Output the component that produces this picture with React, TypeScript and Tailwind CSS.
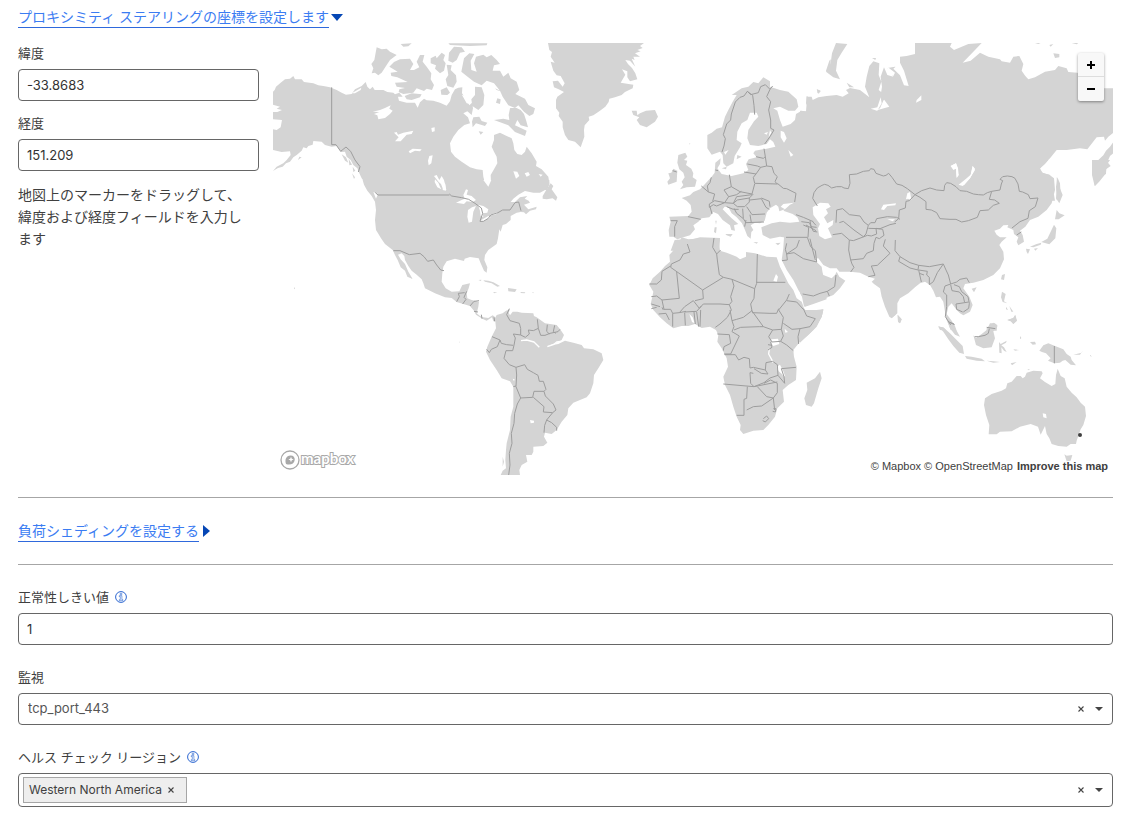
import { useState } from "react";

type Tile = {
  x: number;
  y: number;
  land?: string;
  water?: string;
  borders?: string;
  rivers?: string;
};

// Each tile is drawn on a grid three times finer than the map itself.
const TILES: Tile[] = [
  // Alaska, Canada and the arctic islands
  {
    x: -3,
    y: -3,
    land: `M9 155 L14 150 18 140 32 128 45 118 60 116 70 108 75 118 95 118 102 126 130 130 145 136 160 138 180 142 200 150 215 158 228 164 245 162 255 148 275 138 287 126 292 140 300 148 308 140 314 150 340 150 352 156 370 158 375 163 388 158 398 170 384 170 387 182 410 188 435 188 443 203 450 187 462 176 470 181 490 182 510 188 530 197 540 184 545 165 555 148 565 143 577 142 576 160 590 180 598 196 606 188 609 205 605 225 592 214 580 220 594 232 600 250 583 255 565 270 550 290 540 310 543 335 555 350 575 365 600 382 620 388 638 390 640 410 645 430 655 440 663 430 662 405 672 388 682 370 680 350 672 335 665 320 672 300 672 285 690 278 710 288 725 295 730 310 733 330 742 342 755 345 765 335 770 320 785 340 800 365 798 378 815 388 835 410 838 430 832 450 300 455 290 435 275 415 268 400 262 385 250 375 242 360 230 350 225 335 213 336 200 318 185 320 165 315 155 305 130 303 128 314 115 318 110 325 100 322 95 332 80 345 70 352 60 365 48 370 38 380 24 384 9 393 20 380 40 370 50 360 62 345 60 334 35 336 9 330Z
      M320 22 L335 28 350 26 360 35 380 45 360 60 350 75 335 98 325 106 315 98 305 100 310 85 304 72 313 60Z
      M358 80 L372 66 390 58 420 56 430 72 420 90 432 90 448 82 440 65 450 45 463 45 458 65 470 80 484 100 482 118 492 135 486 150 470 146 462 153 440 145 430 158 400 162 386 156 388 148 405 144 380 140 375 128 413 126 382 112 364 108 362 98 383 95Z
      M482 55 L497 47 500 55 515 38 525 45 520 60 527 70 522 92 510 100 495 86 498 76 482 70Z
      M530 74 L545 76 542 90 558 106 560 125 550 143 532 138 527 118 535 105Z
      M537 38 L552 20 575 22 585 35 570 38 560 60 548 68 535 62Z
      M535 10 L652 10 650 16 600 18 540 15Z M392 12 L425 10 415 19 400 20Z
      M582 55 L598 40 613 42 602 62 604 90 620 95 612 70 618 50 640 44 650 52 664 45 680 60 690 72 672 76 668 92 690 92 700 110 715 98 722 115 740 125 748 150 736 162 765 176 775 195 795 205 790 222 778 228 762 215 745 196 735 204 715 196 698 170 690 152 672 130 650 122 635 136 612 125 590 108 574 95Z
      M615 140 L635 142 643 165 640 195 625 210 607 198 604 178 615 165Z
      M610 232 L628 230 635 243 652 248 645 258 618 250 608 262 606 245Z M626 274 L640 276 632 284Z
      M672 240 L700 236 718 240 716 225 720 205 732 200 752 210 762 222 768 240 774 262 752 256 742 240 735 256 770 272 765 288 735 276 715 256Z
      M512 150 L530 142 540 158 532 165 514 164Z M682 175 L692 178 690 192 678 188Z M675 145 L698 156 680 150Z
      M404 168 L425 160 455 163 450 172 425 180 410 178Z
      M215 343 L228 352 235 368 225 362Z M236 356 L246 374 238 376Z M248 380 L256 392 250 396Z M246 400 L255 412 252 417Z M88 350 L95 352 84 360Z`,
    water: `M9 194 L30 200 20 206 36 210 22 216 9 216Z M9 238 L36 240 32 262 20 270 9 268Z
      M308 215 L330 210 345 204 362 196 358 206 368 212 360 222 345 234 325 238 322 226 312 222 328 216Z
      M372 278 L380 276 384 284 400 278 430 272 425 282 410 284 392 304 375 304 386 292Z
      M416 334 L428 326 455 328 450 334 435 332 420 340Z
      M484 264 L494 262 494 274 486 276Z M478 348 L488 346 484 370 476 376 474 362Z
      M492 408 L500 405 508 420 515 408 522 420 529 450 520 450 513 432 506 426Z
      M730 394 L742 395 748 408 738 416Z M764 400 L775 396 780 405 770 410Z M806 402 L818 404 812 410Z
      M245 160 L262 150 274 143 272 150 255 160Z M576 165 L590 168 600 192 590 190Z`,
    borders: `M185 142 L185 314 198 314 212 334 228 321 242 334 255 360 270 380 265 396`,
  },
  // United States, Mexico and the Caribbean
  {
    x: -3,
    y: 137,
    land: `M278 0 L838 0 838 15 825 30 810 38 790 38 765 33 745 44 730 56 722 66 735 66 750 52 772 48 764 56 776 62 780 68 762 74 775 88 800 80 798 88 780 92 768 103 762 97 752 96 740 98 722 108 722 120 708 132 698 135 692 155 688 148 684 175 680 192 655 210 645 225 643 240 652 262 650 278 642 272 632 250 626 235 600 231 584 236 582 243 555 236 530 244 520 260 517 280 515 305 527 325 545 335 568 334 577 315 600 310 596 325 590 340 592 355 605 360 627 365 625 380 620 400 630 408 640 412 655 414 668 406 676 412 678 424 670 424 666 412 650 422 637 416 618 404 612 392 600 378 580 372 560 366 545 354 525 352 495 340 465 325 460 310 455 298 440 284 425 272 415 258 405 240 403 228 395 220 384 224 392 238 405 252 415 275 428 297 412 290 405 272 392 262 383 240 375 225 368 210 345 192 334 176 324 160 318 150 315 120 318 90 315 65 305 48 292 32 282 14Z
      M288 24 L305 34 315 46 303 42Z
      M818 48 L830 28 842 10 850 18 845 28 855 42 862 52 858 62 848 55 830 58 818 56Z
      M640 301 L655 302 670 307 690 318 682 320 665 310 645 305Z M714 324 L740 328 735 336 715 334Z M752 336 L766 337 764 340 752 339Z M670 336 L682 337 672 340Z M625 300 L634 299 633 303Z M786 337 L791 337 790 340Z M72 320 L75 326 72 328Z`,
    water: `M558 68 L575 60 584 56 580 45 588 28 594 30 590 44 605 48 618 60 608 66 590 64 582 72Z
      M606 82 L618 78 610 95 606 125 596 128 592 110 594 90Z
      M624 74 L640 78 655 88 652 98 638 100 640 112 632 108 630 92Z
      M630 122 L655 108 662 112 640 124Z M660 104 L684 96 680 102 664 106Z
      M495 -2 L505 8 510 20 514 28 502 22 494 6Z M516 0 L526 12 528 32 518 30 520 14Z M640 0 L664 0 655 20Z
      M310 36 L324 42 318 56Z`,
    borders: `M316 38 L324 45 538 45 M538 42 L545 48 575 53 596 58 615 70 634 84 638 100 630 124 640 124 655 115 662 105 684 98 698 90 720 90 735 68 746 66 753 92
      M370 212 L390 212 418 224 450 220 462 230 473 244 490 240 500 255 512 270 522 272
      M560 365 L568 350 565 340 584 338 M590 334 L582 352 588 358 578 372 M600 378 L612 364 627 362 M612 394 L624 396 M634 404 L636 416 M672 412 L674 424`,
  },
  // South America
  {
    x: 157,
    y: 237,
    land: `M195 115 L200 105 218 100 228 92 240 88 236 98 240 106 248 95 262 95 275 98 310 100 312 108 320 112 345 130 380 135 392 150 402 165 395 180 375 190 352 198 385 192 405 182 430 188 455 195 462 205 490 208 515 220 520 240 505 265 492 285 490 310 480 340 470 352 450 360 430 368 415 385 412 405 395 425 380 450 365 462 345 458 342 470 352 488 340 498 310 500 310 515 305 525 288 525 292 545 275 555 268 570 270 585 212 585 218 572 228 565 226 540 228 510 230 490 240 450 242 410 250 380 250 320 240 304 215 295 200 270 180 240 168 215 172 200 185 170 198 145Z
      M218 530 L222 545 218 560Z M87 184 L89 187 87 188Z`,
    water: `M300 420 L312 422 312 428 302 430Z M248 296 L254 298 252 304Z`,
    rivers: `M273 182 L290 180 312 186 328 202 M352 200 L370 194 380 186 392 184`,
    borders: `M238 86 L230 104 240 122 268 130 272 145 272 165 250 162 256 174 252 196 248 212 228 212 222 235 238 254 258 262
      M272 165 L286 172 298 162 295 150 310 152 325 145 322 118 M325 145 L332 166 345 166 360 160 384 155 390 148 M352 134 L350 154 358 162 M374 136 L370 155 378 160
      M186 170 L210 180 214 190 230 194 250 196 M210 180 L202 200 184 208 178 218 170 208
      M258 262 L284 254 292 268 310 278 324 286 328 304 340 304 348 328 342 334 312 334 308 352 272 354 258 320 260 285 258 262
      M250 320 L258 318 M342 334 L346 348 370 372 378 390 368 398 340 396 342 380 310 352 M368 398 L350 420 344 436 342 458 M350 420 L365 428 380 442 380 452
      M272 354 L262 372 254 400 252 430 244 460 246 490 238 520 240 555 236 585`,
  },
  // Greenland, northern Europe and the Mediterranean
  {
    x: 267,
    y: -3,
    land: `M24 9 L312 9 300 18 308 24 292 30 302 34 285 40 300 50 280 50 284 60 275 56 286 80 270 62 256 60 264 72 276 84 286 100 292 118 270 124 262 112 262 94 246 88 256 104 242 128 280 134 278 145 255 156 245 165 225 172 208 176 206 186 196 200 180 212 160 226 146 230 148 240 134 256 132 270 133 290 122 322 105 305 85 300 75 285 68 262 68 245 56 228 58 218 48 205 48 180 52 170 72 156 56 148 42 142 38 124 54 122 68 140 74 130 62 108 50 106 40 92 32 65 44 68 32 50 36 36 28 30Z
      M275 212 L290 212 292 226 300 220 318 212 345 210 354 230 345 245 320 262 300 255 290 240 298 232 280 225Z
      M415 345 L436 338 442 350 432 360 442 362 438 375 454 386 460 400 458 412 470 420 465 440 440 442 420 448 430 435 425 425 434 412 430 398 418 388 412 368Z
      M385 400 L394 398 400 386 412 392 410 425 385 434 382 425 390 415Z M448 310 L451 310 449 314Z
      M502 285 L515 278 530 266 546 262 555 230 565 210 578 185 590 165 575 165 605 145 625 140 640 126 655 130 670 112 690 124 690 140 720 150 745 155 770 178 775 200 765 212 745 212 720 200 700 205 712 212 720 240 728 260 752 252 765 240 768 222 785 212 800 215 802 205 820 200 830 190 850 175 872 168 872 632 732 632 736 600 745 594 720 590 690 596 668 585 664 562 695 550 720 545 750 548 778 545 772 532 758 522 730 512 750 494 762 488 730 492 722 500 735 508 718 514 715 500 708 494 690 505 680 518 674 542 660 550 645 548 632 556 640 570 634 576 632 596 622 588 615 570 606 550 590 532 575 520 565 502 554 500 548 508 562 522 575 535 595 552 582 556 585 572 574 570 570 556 548 540 534 522 520 516 508 532 485 535 475 545 460 556 465 568 450 586 430 592 412 598 400 590 388 590 386 570 392 545 388 530 445 528 455 515 452 495 440 482 425 474 450 466 460 456 480 448 495 432 515 410 524 398 526 368 542 355 540 372 532 385 545 402 575 408 610 400 625 390 618 372 626 358 650 352 640 340 645 332 680 326 706 320 700 306 690 298 680 312 655 318 630 315 622 295 625 270 642 244 655 230 650 218 630 218 622 240 605 250 592 275 590 300 605 310 600 322 584 348 580 370 560 380 550 370 548 345 540 335 515 344 502 325Z
      M545 385 L560 380 558 388Z M592 345 L605 350 590 358Z
      M556 582 L578 582 572 590 560 586Z M524 562 L530 562 528 580 522 576Z M526 542 L530 542 528 554Z M706 610 L722 608 714 616Z M640 606 L654 607 650 611Z
      M868 62 L872 58 872 98 858 92Z M830 148 L842 152 836 162Z M800 168 L815 178 822 192 804 202 798 190Z
      M404 600 L430 598 440 602 480 592 540 594 538 632 392 632Z`,
    water: `M722 272 L732 276 740 295 732 308 722 292Z M745 330 L760 345 752 350Z M552 336 L566 330 556 344Z M552 460 L554 462 553 463Z
      M690 270 L694 278 686 292Z M672 280 L684 276 680 284Z`,
    borders: `M546 336 L552 318 556 296 550 284 560 252 572 240 574 222 586 186 600 172 612 168 622 154 638 166 642 196 644 224 M622 154 L632 164 655 158 662 140 676 134 690 148 680 170 692 185 686 210 692 240 692 265 702 270 690 290 674 312 M690 148 L698 138
      M672 326 L676 350 670 355 648 350 M676 350 L680 378 662 382 652 378 622 372 M662 382 L648 402 612 396 M680 378 L696 380 702 400 712 410 705 425 712 432 644 430 640 412 648 402 M712 430 L730 445 740 446 768 460 764 486
      M568 404 L574 440 600 455 636 462 644 432 M514 412 L510 428 502 438 505 456 524 462 518 484 M484 438 L505 456 M574 440 L552 450 566 470 590 464 604 454 M566 470 L554 488 524 482 508 492 508 502 520 494 530 498 554 488 580 490 590 470 636 464 M580 490 L592 480 628 474 628 486 614 500 592 500 580 490 M560 500 L580 508 596 508 M628 474 L640 462 M630 480 L664 476 678 502 688 508 M664 474 L688 484 690 500 M620 500 L636 524 675 522 M608 506 L610 536 590 520 582 505 M610 536 L618 548 672 546 M630 524 L634 548 M618 540 L614 560 M510 500 L516 522 M444 530 L482 538 M392 542 L412 542 404 560 404 590 M398 392 L410 396 M526 390 L534 392
      M768 524 L790 532 820 545 M784 545 L808 548 820 574 832 576 M790 555 L806 562 804 592 M818 545 L828 556 M812 560 L830 562`,
  },
  // Africa and Arabia
  {
    x: 367,
    y: 187,
    land: `M125 22 L145 28 190 25 240 25 236 45 240 62 260 68 290 80 300 88 318 80 318 66 345 70 380 80 410 82 420 110 430 130 445 160 460 180 470 205 485 215 492 235 500 245 520 245 550 238 545 260 530 290 505 315 480 335 460 360 462 380 470 410 468 450 445 465 428 480 432 515 412 535 405 560 385 585 370 600 340 602 310 612 300 600 302 585 290 560 280 530 270 495 255 465 250 440 264 410 260 385 245 355 232 335 235 315 228 300 210 290 185 294 165 282 145 288 125 288 100 295 80 280 60 262 40 240 32 222 36 205 40 185 28 165 38 145 60 125 75 108 90 95 88 75 110 50Z
      M432 22 L430 55 425 90 440 120 460 150 475 180 490 205 495 230 520 222 560 208 545 110 530 96 522 80 500 0 435 0Z
      M540 425 L545 445 535 475 522 520 515 530 498 525 493 505 502 480 500 458 525 445Z`,
    water: `M394 328 L414 326 418 342 400 348 394 340Z M408 132 L414 140 410 156 400 152Z M148 252 L158 262 164 280 156 276Z M410 410 L420 404 430 424 436 440 430 436 416 424Z M434 296 L444 306 436 308Z`,
    rivers: `M388 356 L386 372 400 398 M422 415 L430 436`,
    borders: `M142 42 L150 66 130 72 120 90 94 102 92 112 188 180 250 142 238 134 232 90 230 72 218 52 222 24 M230 72 L242 60 M92 108 L66 124 64 150 50 162 28 162 M110 126 L118 205 66 210 50 198 34 200
      M188 180 L190 206 165 212 M250 142 L276 148 344 176 350 160 352 72 M350 157 L436 157 M276 148 L282 168 272 200 276 214 268 224 240 222 190 222 178 235 160 212 134 230 118 248 98 250 92 238 72 238 66 210 M344 176 L342 205 332 222 336 242 310 262 290 268 276 272 270 240
      M34 222 L60 230 M34 236 L50 232 M56 252 L78 250 88 270 M70 240 L66 232 M98 250 L98 290 M134 248 L136 286 M134 246 L170 244 184 228 M170 246 L176 290 M162 246 L166 282 M182 240 L180 290 M268 224 L274 240 262 262 240 282 226 292 M118 248 L138 244
      M276 272 L282 290 276 305 298 318 272 372 252 372 M232 312 L268 314 272 340 252 350 250 362 M282 300 L302 292 358 290 370 290 M334 240 L370 290 398 300 424 298 430 262 416 240 M336 248 L390 250 410 250 416 236 M416 240 L440 210 448 192 M440 212 L470 216 490 238 M490 236 L500 258 526 266 510 290 480 296 456 298 430 280 M480 296 L474 320 476 342 M424 298 L430 318 422 334 396 336 386 320 398 300 M422 334 L440 345 460 362 M392 336 L396 352 384 360 M384 344 L396 346
      M254 374 L286 374 296 390 312 382 328 386 330 414 340 412 376 420 378 398 398 394 412 404 414 436 390 444 372 458 342 470 332 460 330 428 340 430 M342 416 L364 430 384 432 376 420 M250 462 L342 470 412 456 M322 470 L320 505 312 508 312 556 290 556 M320 540 L340 530 365 528 400 504 380 500 352 470 M372 460 L392 450 412 460 412 488 400 504 404 540 M414 436 L434 460 432 440 424 416 468 412 M370 566 L380 558 386 566 376 576 368 572 M400 536 L408 536 406 546 398 544
      M438 22 L502 22 512 50 526 62 530 96 490 86 462 68 440 72 436 58 440 40 M478 30 L470 52 440 72 442 90 426 92`,
  },
  // Siberia and the russian arctic
  {
    x: 527,
    y: -3,
    land: `M0 212 L18 214 20 190 20 170 35 170 38 180 55 172 80 168 110 165 128 170 146 160 138 150 150 144 180 150 208 172 195 140 200 110 208 78 220 64 238 70 236 105 244 125 236 150 248 160 270 152 284 185 270 188 260 168 250 182 240 205 225 212 268 200 242 165 246 140 242 110 252 82 262 105 280 110 262 84 285 80 300 85 300 62 300 50 320 48 345 42 345 9 455 9 450 20 462 30 505 12 545 9 520 35 488 68 512 62 540 38 565 50 600 58 605 64 630 68 640 50 658 48 670 72 665 92 676 108 685 118 705 112 735 95 765 90 775 78 800 85 805 96 832 98 870 120 912 145 940 145 940 278 925 290 915 302 912 290 890 292 872 315 862 328 840 325 800 330 770 330 750 355 735 370 718 388 728 398 750 405 758 440 765 482 0 482Z
      M108 9 L142 12 125 38 112 60 108 92 120 118 100 112 78 95 92 70 96 40Z M140 128 L162 142 148 142Z M52 148 L62 154 52 160Z M216 54 L228 54 226 60Z
      M760 40 L778 42 778 52 765 54Z M748 15 L760 12 752 20Z M705 9 L722 9 715 12Z M815 9 L835 9 830 13Z
      M940 306 L930 320 918 332 910 346 880 374 876 390 880 412 885 438 898 424 902 408 918 402 918 388 932 378 922 366 930 348 940 340Z
      M772 412 L780 430 782 465 770 480 768 440Z`,
    water: `M212 206 L232 202 242 172 245 190 232 212Z M262 80 L285 98 280 108 262 100Z M300 68 L312 92 326 138 312 136 300 106 280 86Z M350 180 L364 166 364 180 348 188Z M452 378 L468 370 472 384 460 390Z M518 378 L525 390 510 415 488 438 476 434 495 425 512 405Z M468 385 L476 405 470 415Z`,
  },
  // Central, south and east Asia
  {
    x: 527,
    y: 117,
    land: `M0 0 L745 0 735 12 720 25 728 40 748 44 762 55 765 90 755 130 740 150 715 170 690 180 676 200 660 212 668 225 672 245 655 256 650 245 655 232 642 222 640 210 622 202 625 195 610 196 600 206 583 212 590 224 600 232 620 232 605 245 598 255 610 275 612 298 600 325 580 345 550 360 520 368 495 372 490 385 508 410 518 435 510 455 490 466 480 460 470 450 455 430 445 440 440 462 455 482 465 498 470 512 452 510 440 480 435 455 430 425 420 410 408 412 400 392 390 375 375 365 360 370 345 382 325 400 300 415 292 430 292 460 275 475 268 470 255 440 245 410 240 385 222 372 215 365 225 356 205 350 180 338 150 335 118 335 110 325 90 325 70 315 55 295 40 296 60 325 70 345 95 355 105 345 110 335 118 350 136 362 120 385 100 405 50 425 12 440 6 410 0 400Z
      M0 455 L70 448 65 470 45 505 30 512 0 512Z
      M293 465 L305 478 300 490 294 484Z M606 345 L615 342 612 360 603 358Z M515 386 L530 382 522 397Z
      M606 395 L617 402 612 424 622 430 608 426 603 412Z M628 438 L640 455 634 455Z M618 440 L624 450 618 448Z M612 452 L604 468 610 456Z M622 480 L640 474 645 466 650 482 640 492 632 484Z
      M762 194 L769 205 766 235 748 253 724 246 742 236 752 215Z M690 260 L710 252 724 248 722 254 700 262Z M702 266 L714 264 706 272Z M678 266 L690 268 684 282 680 276Z M770 150 L778 160 794 166 776 178 765 178Z
      M770 50 L778 80 788 105 778 130 768 115 772 90Z M876 0 L930 0 920 15 918 40 900 62 884 78 876 45Z
      M415 500 L430 502 440 512 420 510Z M560 505 L580 488 592 495 590 512 560 512Z`,
    water: `M38 142 L60 128 85 130 92 140 78 148 84 160 72 172 82 190 100 180 98 195 84 205 96 232 75 238 58 228 54 205 60 192 40 165Z
      M243 148 L250 134 270 132 288 130 286 136 262 138 252 150Z M262 178 L285 178 278 184Z M322 100 L330 96 334 120 324 116 318 118Z
      M452 18 L468 10 474 24 476 45 470 52 468 26 460 26Z M518 18 L525 26 510 55 492 76 476 74 500 55 512 44Z`,
    borders: `M52 138 L38 115 42 98 52 84 66 76 74 73 84 76 95 84 110 80 125 80 132 84 145 86 150 70 148 44 170 42 190 34 208 32 212 26 222 28 228 40 250 48 258 46 266 40 276 52 290 72 306 76 322 86 345 104 328 122 318 124 316 144 298 150 296 176 284 186
      M345 104 L365 92 390 84 410 90 432 92 434 76 440 68 452 70 468 80 480 92 500 94 520 102 535 104 550 105 562 98 575 94 600 90 604 72 608 62 600 58 608 50 622 48 636 50 645 55 654 72 658 94 668 96 685 104 690 116 714 114 706 140 688 152 684 175 660 185 636 204
      M575 94 L568 118 584 120 598 130 580 136 565 150 540 152 532 172 505 182 485 186 468 178 450 178 420 176 410 158 394 150 378 148 378 125 360 112 345 104
      M108 188 L110 150 128 146 148 164 180 168 192 186 205 196 212 188 225 188 230 176 262 170 290 172 300 178 M205 196 L198 222 190 230 162 210 130 184 118 188 M98 224 L125 220 148 240 160 242 192 230 202 226 214 228 230 222 228 205 248 208 252 226 238 236 228 232 M205 205 L240 206 270 194 288 190
      M148 240 L146 270 152 300 190 296 200 280 220 272 222 250 228 232 M152 300 L156 312 162 322 152 336 M205 350 L225 346 214 318 232 316 270 280 250 258 256 238 M286 240 L285 272 300 290 330 308 356 316 354 330 330 324 296 304 300 290 M356 316 L388 320 430 312 438 330 445 345 452 372 435 378 430 396 440 405 440 440 436 470 452 495
      M356 330 L364 366 M356 330 L382 334 380 345 388 352 388 374 400 365 412 338 430 312 M358 340 L372 345 M452 372 L470 366 480 358 500 354 508 368 M462 374 L478 380 485 395 504 410 508 430 506 445 490 456 M452 374 L456 392 478 396 490 410 494 428 468 432 470 448 488 456 M494 428 L506 426 M650 225 L664 216 M445 485 L462 492 M30 236 L38 270 46 300 M18 195 L48 212 M30 182 L34 204
      M8 402 L40 408 60 400 82 394 104 380 108 345 M82 394 L88 408`,
  },
  // Indonesia and Australia
  {
    x: 527,
    y: 267,
    land: `M555 265 L575 252 605 242 618 235 622 220 635 215 650 198 662 198 668 205 675 200 680 188 700 182 725 184 728 190 720 205 735 216 755 228 766 222 768 195 773 176 782 198 794 205 800 230 815 248 830 262 842 278 855 290 858 318 850 345 842 358 830 392 828 402 812 402 800 410 775 408 755 402 748 385 740 372 735 348 728 362 722 374 714 350 692 342 660 350 635 364 600 365 590 373 566 373 568 345 558 315 552 285Z
      M793 433 L800 437 817 435 812 452 800 454Z
      M690 96 L705 95 708 103 698 104Z M718 122 L730 106 745 100 765 108 790 118 800 132 812 140 815 150 828 166 812 164 796 150 788 152 780 158 763 160 744 152 752 145 738 130 726 126Z M820 134 L845 128 848 122 840 134Z M870 134 L876 140 870 138Z
      M520 76 L528 84 545 72 560 60 570 40 585 40 592 50 580 64 585 85 575 112 550 115 528 105Z
      M414 48 L432 54 450 70 470 90 488 108 492 132 478 128 460 108 445 88 430 65Z
      M440 0 L440 20 455 40 470 62 480 80 465 74 450 55 446 42 435 15Z
      M495 138 L515 140 545 146 555 154 530 152 500 146Z M560 152 L580 154 600 156 580 158Z M632 160 L650 156 636 166Z
      M597 96 L602 102 620 92 618 98 604 106 612 112 620 126 612 122 604 112 605 130 598 128Z
      M622 30 L640 24 646 14 651 32 640 42 634 34Z M660 78 L664 84 660 88Z M640 118 L658 120 645 122Z M682 178 L690 178 686 181Z
      M265 0 L290 0 287 14 275 24Z M293 14 L305 28 300 40 294 36Z
      M0 0 L70 0 65 20 40 60 0 98Z`,
    water: `M728 310 L738 312 740 325 730 322Z`,
    borders: `M763 108 L763 160 M524 80 L535 80 555 76 565 70 568 56 M560 52 L586 56 M450 38 L464 44`,
  },
];

function WorldMap() {
  return (
    <svg viewBox="0 0 840 432" className="block h-auto w-full" role="img" aria-label="world map">
      {TILES.map((t) => (
        <g key={`land-${t.x}-${t.y}`} transform={`translate(${t.x} ${t.y}) scale(0.33333)`}>
          <path d={t.land} fill="#d4d4d4" />
        </g>
      ))}
      {TILES.map((t) => (
        <g key={`line-${t.x}-${t.y}`} transform={`translate(${t.x} ${t.y}) scale(0.33333)`} fill="none" strokeLinejoin="round">
          <path d={t.water} fill="#fff" />
          <path d={t.rivers} stroke="#fff" strokeWidth="4" />
          <path d={t.borders} stroke="#9d9d9d" strokeWidth="3" />
        </g>
      ))}
      <circle cx="807" cy="392" r="2" fill="#404040" />
    </svg>
  );
}

function MapboxLogo() {
  return (
    <svg viewBox="0 0 82 22" className="h-[22px] w-[82px]" aria-label="mapbox">
      <circle cx="11" cy="11" r="9" fill="#fff" stroke="#a8a8a8" strokeWidth="1.3" />
      <path d="M7 15 C5.500 11 7 6.500 11.500 6.500 C14.500 6.500 16 8.500 15.700 11 C15.200 15 11 16.500 7 15Z" fill="#a8a8a8" />
      <path d="M12 7.800 L12.800 9.700 14.700 10.500 12.800 11.300 12 13.200 11.200 11.300 9.300 10.500 11.200 9.700Z" fill="#fff" />
      <text
        x="22"
        y="15"
        className="font-['Lato'] text-[15px] font-bold"
        fill="#fff"
        stroke="#a8a8a8"
        strokeWidth="2"
        paintOrder="stroke"
      >
        mapbox
      </text>
    </svg>
  );
}

function InfoIcon() {
  return (
    <svg viewBox="0 0 12 12" className="h-3 w-3" fill="none" stroke="#2c66d0" aria-hidden="true">
      <circle cx="6" cy="6" r="5.400" />
      <path d="M4.200 4.700 H6.900 V8.700 H7.900 V9.700 H4.200 V8.700 H5.300 V5.600 H4.200Z" strokeWidth="0.600" />
      <path d="M5.200 2.300 H6.800 V3.700 H5.200Z" strokeWidth="0.600" />
    </svg>
  );
}

function Caret() {
  return (
    <svg viewBox="0 0 8 4" className="h-1 w-2" fill="#444" aria-hidden="true">
      <path d="M0 0 H8 L4 4Z" />
    </svg>
  );
}

function Cross() {
  return (
    <svg viewBox="0 0 6 6" className="h-[6px] w-[6px]" stroke="#444" strokeWidth="1.100" aria-hidden="true">
      <path d="M0.500 0.500 L5.500 5.500 M5.500 0.500 L0.500 5.500" />
    </svg>
  );
}

function Toggle({ text, open }: { text: string; open: boolean }) {
  return (
    <div className="flex h-[22px] items-center">
      <a href="#" className="h-[22px] border-b border-[#2f69dc] text-sm leading-[22px] text-[#3b7cf2]">
        {text}
      </a>
      {open ? (
        <svg viewBox="0 0 12 7" className="ml-[2px] h-[7px] w-3" fill="#0647b5" aria-hidden="true">
          <path d="M0 0 H12 L6 7Z" />
        </svg>
      ) : (
        <svg viewBox="0 0 7 12" className="ml-1 h-3 w-[7px]" fill="#0647b5" aria-hidden="true">
          <path d="M0 0 V12 L7 6Z" />
        </svg>
      )}
    </div>
  );
}

const label = "flex h-5 items-center gap-[6px] text-[13px] leading-5";
const field = "mt-[6px] block h-8 w-full rounded border border-[#666] bg-white px-2 text-[13px] text-[#333]";
const iconButton = "flex h-6 w-[18px] items-center justify-center";

export default function App() {
  const [lat, setLat] = useState("-33.8683");
  const [lng, setLng] = useState("151.209");
  const [threshold, setThreshold] = useState("1");
  const [monitor, setMonitor] = useState("tcp_port_443");
  const [regions, setRegions] = useState(["Western North America"]);

  return (
    <main className="bg-white pt-[6px] pr-[14px] pb-[14px] pl-[18px] font-['Inter','Noto_Sans_CJK_JP',sans-serif] text-[#404040]">
      <Toggle text="プロキシミティ ステアリングの座標を設定します" open />

      <section className="mt-[15px] flex gap-[14px]">
        <div className="w-[241px] shrink-0">
          <label htmlFor="lat" className={label}>緯度</label>
          <input id="lat" className={field} value={lat} onChange={(e) => setLat(e.target.value)} />
          <label htmlFor="lng" className={`${label} mt-3`}>経度</label>
          <input id="lng" className={field} value={lng} onChange={(e) => setLng(e.target.value)} />
          <p className="mt-[13px] pr-2 text-sm leading-[22px]">
            地図上のマーカーをドラッグして、緯度および経度フィールドを入力します
          </p>
        </div>
        <div className="relative min-w-0 flex-1 self-start">
          <WorldMap />
          <div className="absolute top-[10px] right-[9px] flex w-[26px] flex-col divide-y divide-[#ddd] rounded-xs bg-[#f8f8f8] shadow-[0_1px_3px_rgba(0,0,0,0.4)]">
            <button aria-label="zoom in" className="flex h-6 items-center justify-center">
              <svg viewBox="0 0 8 8" className="h-2 w-2" stroke="#000" strokeWidth="2">
                <path d="M0 4 H8 M4 0 V8" />
              </svg>
            </button>
            <button aria-label="zoom out" className="flex h-6 items-center justify-center">
              <svg viewBox="0 0 8 8" className="h-2 w-2" stroke="#000" strokeWidth="2">
                <path d="M0 4 H8" />
              </svg>
            </button>
          </div>
          <div className="absolute bottom-1 left-[6px]">
            <MapboxLogo />
          </div>
          <div className="absolute right-[5px] bottom-px flex gap-1 font-['Liberation_Sans',Arial,sans-serif] text-[11px] leading-4">
            <span>
              <a href="#">© Mapbox</a> <a href="#">© OpenStreetMap</a>
            </span>
            <a href="#" className="font-bold">Improve this map</a>
          </div>
        </div>
      </section>

      <hr className="my-[22px] border-[#a6a6a6]" />
      <Toggle text="負荷シェディングを設定する" open={false} />
      <hr className="my-[22px] border-[#a6a6a6]" />

      <label htmlFor="threshold" className={label}>
        正常性しきい値 <InfoIcon />
      </label>
      <input id="threshold" className={field} value={threshold} onChange={(e) => setThreshold(e.target.value)} />

      <label htmlFor="monitor" className={`${label} mt-[22px]`}>監視</label>
      <div className="mt-[6px] flex h-8 items-center rounded border border-[#666] pr-1">
        <select
          id="monitor"
          className="h-full min-w-0 flex-1 appearance-none bg-transparent pl-[9px] text-[13px] text-[#555]"
          value={monitor}
          onChange={(e) => setMonitor(e.target.value)}
        >
          <option value="" />
          <option value="tcp_port_443">tcp_port_443</option>
        </select>
        <button aria-label="clear monitor" className={iconButton} onClick={() => setMonitor("")}>
          <Cross />
        </button>
        <button aria-label="open monitors" className={iconButton}>
          <Caret />
        </button>
      </div>

      <label htmlFor="regions" className={`${label} mt-[22px]`}>
        ヘルス チェック リージョン <InfoIcon />
      </label>
      <div className="mt-[6px] flex h-[34px] items-center rounded border border-[#666] pr-1 pl-1">
        {regions.map((r) => (
          <span key={r} className="flex h-[26px] items-center border border-[#a6a6a6] bg-[#eee] pr-[6px] pl-[5px] text-xs">
            {r}
            <button
              aria-label={`remove ${r}`}
              className={iconButton}
              onClick={() => setRegions((prev) => prev.filter((p) => p !== r))}
            >
              <Cross />
            </button>
          </span>
        ))}
        <input id="regions" className="h-full min-w-0 flex-1 bg-transparent px-2 text-[13px] outline-none" />
        <button aria-label="clear regions" className={iconButton} onClick={() => setRegions([])}>
          <Cross />
        </button>
        <button aria-label="open regions" className={iconButton}>
          <Caret />
        </button>
      </div>
    </main>
  );
}
